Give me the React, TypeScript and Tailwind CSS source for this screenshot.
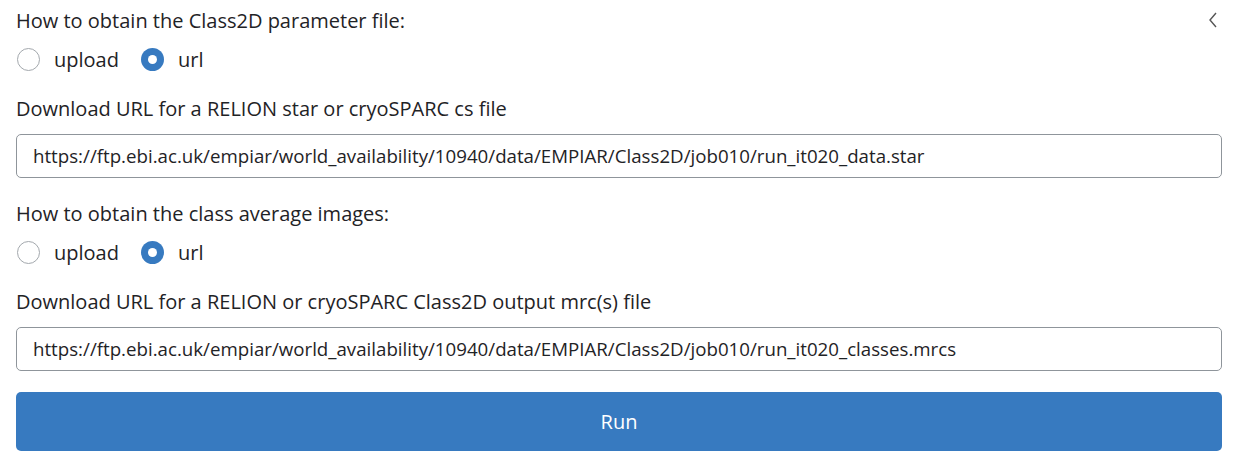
import React, { useState } from "react";

function Radio({ checked, label, onClick }: { checked: boolean; label: string; onClick: () => void }) {
  return (
    <label className="flex items-center cursor-pointer" onClick={onClick}>
      {checked ? (
        <span className="w-[23px] h-[23px] rounded-full bg-[#377ac0] flex items-center justify-center">
          <span className="w-[9px] h-[9px] rounded-full bg-white" />
        </span>
      ) : (
        <span className="w-[23px] h-[23px] rounded-full border border-[#a3a8ad] bg-white" />
      )}
      <span className="ml-[14px]">{label}</span>
    </label>
  );
}

function Group({ title, urlLabel, value }: { title: string; urlLabel: string; value: string }) {
  const [mode, setMode] = useState("url");
  return (
    <div>
      <div className="h-[27px] leading-[27px]">{title}</div>
      <div className="mt-[12px] h-[27px] flex items-center gap-[22px] pl-[1px]">
        <Radio checked={mode === "upload"} label="upload" onClick={() => setMode("upload")} />
        <Radio checked={mode === "url"} label="url" onClick={() => setMode("url")} />
      </div>
      <div className="mt-[22px] h-[27px] leading-[27px]">{urlLabel}</div>
      <div className="mt-[12px] h-[44px] border border-[#8f959b] rounded-[5px] flex items-center px-[16px] text-[18.7px] text-[#1f2326]">
        {value}
      </div>
    </div>
  );
}

export default function App() {
  return (
    <div
      className="w-[1240px] h-[468px] bg-white text-[20px] text-[#1f2326] relative overflow-hidden"
      style={{ fontFamily: '"Open Sans", "Noto Sans", sans-serif' }}
    >
      <div className="absolute right-[22px] top-[12px]">
        <svg width="10" height="16" viewBox="0 0 10 16" fill="none">
          <path d="M8 1 L2 8 L8 15" stroke="#555" strokeWidth="1.4" />
        </svg>
      </div>
      <div className="pl-[16px] pr-[18px] pt-[7px]">
        <Group
          title="How to obtain the Class2D parameter file:"
          urlLabel="Download URL for a RELION star or cryoSPARC cs file"
          value="https://ftp.ebi.ac.uk/empiar/world_availability/10940/data/EMPIAR/Class2D/job010/run_it020_data.star"
        />
        <div className="mt-[22px]">
          <Group
            title="How to obtain the class average images:"
            urlLabel="Download URL for a RELION or cryoSPARC Class2D output mrc(s) file"
            value="https://ftp.ebi.ac.uk/empiar/world_availability/10940/data/EMPIAR/Class2D/job010/run_it020_classes.mrcs"
          />
        </div>
        <button className="mt-[21px] w-full h-[59px] rounded-[5px] bg-[#377ac0] text-white text-[20px] font-medium flex items-center justify-center">
          Run
        </button>
      </div>
    </div>
  );
}
